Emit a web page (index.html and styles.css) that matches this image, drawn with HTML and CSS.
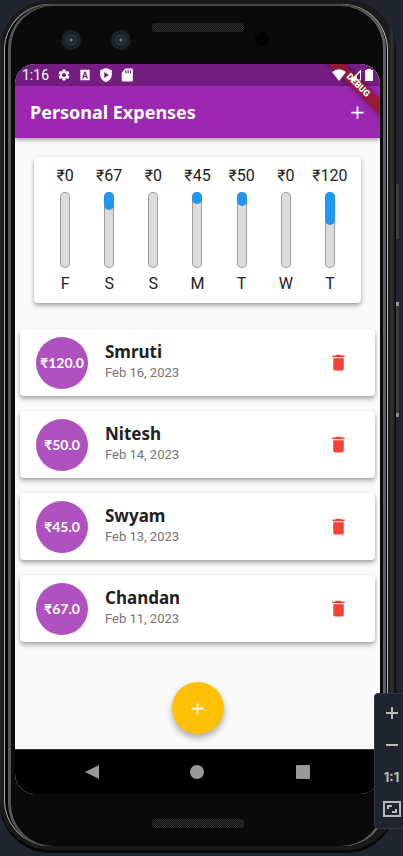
FILE: index.html
```
<!DOCTYPE html>
<html lang="en">
<head>
<meta charset="utf-8">
<meta name="viewport" content="width=device-width, initial-scale=1">
<title>Personal Expenses</title>
<link rel="stylesheet" href="styles.css">
</head>
<body>
<svg class="symbols" aria-hidden="true">
  <symbol id="trash" viewBox="0 0 24 24"><path d="M6 19c0 1.100.9 2 2 2h8c1.100 0 2-.9 2-2V7H6v12zM19 4h-3.500l-1-1h-5l-1 1H5v2h14V4z"/></symbol>
  <symbol id="plus" viewBox="0 0 24 24"><path d="M19 13h-6v6h-2v-6H5v-2h6V5h2v6h6v2z"/></symbol>
</svg>
<div class="device">
  <div class="rim"><div class="bezel">
    <div class="top-bezel">
      <div class="cameras"><i class="lens"></i><i class="lens"></i></div>
      <i class="speaker"></i>
      <i class="sensor"></i>
    </div>
    <div class="screen">
      <div class="statusbar">
        <span class="clock">1:16</span>
        <svg class="status-icon gear" viewBox="0 0 24 24"><path d="M19.140 12.940c.04-.3.060-.61.060-.94 0-.32-.02-.64-.07-.94l2.030-1.580c.18-.14.23-.41.120-.61l-1.920-3.320c-.12-.22-.37-.29-.59-.22l-2.390.96c-.5-.38-1.030-.7-1.620-.94l-.36-2.540c-.04-.24-.24-.41-.48-.41h-3.840c-.24 0-.43.17-.47.41l-.36 2.540c-.59.24-1.130.57-1.620.94l-2.390-.96c-.22-.08-.47 0-.59.22L2.740 8.870c-.12.210-.08.470.12.610l2.030 1.580c-.05.3-.09.630-.09.940s.02.640.07.940l-2.030 1.580c-.18.140-.23.410-.12.610l1.920 3.320c.12.220.37.290.59.220l2.390-.96c.5.380 1.030.7 1.620.94l.36 2.540c.05.240.24.410.48.410h3.840c.24 0 .44-.17.47-.41l.36-2.540c.59-.24 1.130-.56 1.620-.94l2.390.96c.22.080.47 0 .59-.22l1.920-3.320c.12-.22.070-.47-.12-.61l-2.010-1.580zM12 15.600a3.600 3.600 0 1 1 0-7.200 3.600 3.600 0 0 1 0 7.200z"/></svg>
        <svg class="status-icon" viewBox="0 0 24 24"><path fill-rule="evenodd" d="M4 3h16v18H4zM11 6 7 18h2.500l.8-2.500h3.400l.8 2.500H17L13 6zm1 3 1.100 4.500h-2.200z"/></svg>
        <svg class="status-icon" viewBox="0 0 24 24"><path fill-rule="evenodd" d="M12 0 2 4v7c0 6 4 11 10 13 6-2 10-7 10-13V4zM9 7l8 5-8 5z"/></svg>
        <svg class="status-icon" viewBox="0 0 24 24"><path fill-rule="evenodd" d="M9 1h11q2 0 2 2v18q0 2-2 2H5q-2 0-2-2V8zM9 4v5h2V4zm4 0v5h2V4zm4 0v5h2V4z"/></svg>
        <span class="signals">
          <svg class="wifi" viewBox="0 0 14 12"><path d="M0 3Q7-2.500 14 3L7 12z"/></svg>
          <svg class="cell" viewBox="0 0 12 12"><path fill-rule="evenodd" d="M0 12 12 0v12zM7.500 6.500V11H11V3z"/></svg>
          <svg class="battery" viewBox="0 0 8 12"><path d="M2 0h4v1h2v11H0V1h2z"/></svg>
        </span>
      </div>
      <header class="appbar">
        <h1>Personal Expenses</h1>
        <button class="icon-button" aria-label="Add expense"><svg><use href="#plus"/></svg></button>
      </header>
      <span class="ribbon">DEBUG</span>
      <main>
        <section class="chart card" aria-label="Last seven days">
          <div class="day"><span>₹0</span><div class="bar"></div><span>F</span></div>
          <div class="day"><span>₹67</span><div class="bar"><i style="height:24%"></i></div><span>S</span></div>
          <div class="day"><span>₹0</span><div class="bar"></div><span>S</span></div>
          <div class="day"><span>₹45</span><div class="bar"><i style="height:16%"></i></div><span>M</span></div>
          <div class="day"><span>₹50</span><div class="bar"><i style="height:18%"></i></div><span>T</span></div>
          <div class="day"><span>₹0</span><div class="bar"></div><span>W</span></div>
          <div class="day"><span>₹120</span><div class="bar"><i style="height:43%"></i></div><span>T</span></div>
        </section>
        <ul class="expenses">
          <li class="expense card"><span class="amount">₹120.0</span><div class="info"><h2>Smruti</h2><p>Feb 16, 2023</p></div><button class="icon-button delete" aria-label="Delete Smruti"><svg><use href="#trash"/></svg></button></li>
          <li class="expense card"><span class="amount">₹50.0</span><div class="info"><h2>Nitesh</h2><p>Feb 14, 2023</p></div><button class="icon-button delete" aria-label="Delete Nitesh"><svg><use href="#trash"/></svg></button></li>
          <li class="expense card"><span class="amount">₹45.0</span><div class="info"><h2>Swyam</h2><p>Feb 13, 2023</p></div><button class="icon-button delete" aria-label="Delete Swyam"><svg><use href="#trash"/></svg></button></li>
          <li class="expense card"><span class="amount">₹67.0</span><div class="info"><h2>Chandan</h2><p>Feb 11, 2023</p></div><button class="icon-button delete" aria-label="Delete Chandan"><svg><use href="#trash"/></svg></button></li>
        </ul>
        <button class="fab" aria-label="Add expense"><svg><use href="#plus"/></svg></button>
      </main>
      <nav class="navbar">
        <button aria-label="Back"><svg viewBox="0 0 14 14"><path d="M14 0v14L0 7z"/></svg></button>
        <button aria-label="Home"><svg viewBox="0 0 14 14"><circle cx="7" cy="7" r="7"/></svg></button>
        <button aria-label="Overview"><svg viewBox="0 0 14 14"><rect width="14" height="14" rx="1"/></svg></button>
      </nav>
    </div>
    <div class="bottom-bezel"><i class="speaker"></i></div>
  </div></div>
  <i class="side-key power"></i>
  <i class="side-key volume"></i>
</div>
<div class="zoombar">
  <button aria-label="Zoom in"><svg viewBox="0 0 18 18"><path d="M9 3v12M3 9h12"/></svg></button>
  <button aria-label="Zoom out"><svg viewBox="0 0 18 18"><path d="M3 9h12"/></svg></button>
  <button>1:1</button>
  <button aria-label="Fit to window"><svg class="fit" viewBox="0 0 18 18"><path d="M1 2h16v14H1zM5 9V6h4M13 9v3H9"/></svg></button>
</div>
</body>
</html>
```
FILE: styles.css
```
* { box-sizing: border-box; }
body {
  margin: 0;
  position: relative;
  overflow-x: hidden;
  background: #20242e;
  color: #212121;
  font-family: Roboto, "Noto Sans", sans-serif;
}
h1, h2, p, ul { margin: 0; padding: 0; }
i { display: block; }
button { border: 0; padding: 0; background: none; color: inherit; font: inherit; }
svg { display: block; fill: currentColor; }
.symbols { position: absolute; width: 0; height: 0; }

/* Phone body */
.device {
  position: relative;
  margin: 0 7px 4px 0;
  padding: 4px 8px 7px 4px;
  border-radius: 50px;
  background: linear-gradient(90deg, #252525, #1a1a1a 3px, #1a1a1a 98%, #333 99%, #050505);
  box-shadow: inset 0 -3px #080808;
}
.rim {
  padding: 2px 2px 0 4px;
  border-radius: 46px;
  background: #030303;
  box-shadow: inset 1px 0 #aaa, inset -1px 0 #bbb, inset 0 2px #484848, inset 0 -2px #333;
}
.bezel {
  padding: 0 6px 0 7px;
  border-radius: 42px;
  background: #0a0a0a;
  box-shadow: inset 3px 0 #55565a, inset -3px 0 #606064;
}
.top-bezel {
  height: 58px;
  display: grid;
  grid-template-columns: 1fr 92px 1fr;
  padding-top: 17px;
}
.cameras { display: flex; gap: 30px; padding: 7px 0 0 46px; }
.lens {
  width: 20px;
  height: 20px;
  border-radius: 50%;
  background: radial-gradient(circle, #73777a 0 1px, #22272b 2px 4px, #33393d 5px, #192026 6px);
}
.speaker {
  width: 92px;
  height: 9px;
  border-radius: 3px;
  background: repeating-conic-gradient(#303030 0 25%, #111 0 50%) 0 0 / 2px 2px;
}
.sensor { width: 14px; height: 14px; margin: 9px 0 0 11px; border-radius: 50%; background: #010104; }
.bottom-bezel { height: 52px; padding-top: 25px; }
.bottom-bezel .speaker { margin: 0 auto; }
.side-key { position: absolute; right: -3px; width: 3px; background: #3c3c3e; }
.power { top: 184px; height: 55px; }
.volume { top: 302px; height: 115px; border-top: 4px solid #999; border-bottom: 4px solid #888; }

/* App */
.screen {
  position: relative;
  overflow: hidden;
  border-radius: 20px;
  background: #fafafa;
}
.statusbar {
  display: flex;
  align-items: center;
  gap: 7px;
  height: 22px;
  padding: 0 7px;
  background: #751d83;
  color: #fff;
}
.clock { font-size: 14px; margin-right: 1px; }
.status-icon { width: 14px; height: 14px; }
.signals { position: relative; z-index: 1; display: flex; gap: 4px; margin-left: auto; }
.wifi { width: 14px; height: 12px; }
.cell { width: 11px; height: 12px; }
.battery { width: 8px; height: 12px; }
.appbar {
  position: relative;
  display: flex;
  align-items: center;
  justify-content: space-between;
  height: 52px;
  padding: 0 12px 0 15px;
  background: #9c27b0;
  color: #fff;
  box-shadow: 0 2px 4px rgba(0, 0, 0, .35);
}
h1 { font: 700 18px/26px "Noto Sans", sans-serif; }
.icon-button svg { width: 21px; height: 21px; }
.ribbon {
  position: absolute;
  top: 16px;
  right: -28px;
  width: 100px;
  height: 11px;
  transform: rotate(45deg);
  background: rgba(153, 24, 35, .85);
  box-shadow: 0 0 5px rgba(0, 0, 0, .5);
  color: #fff;
  font: 900 9px/11px Roboto, sans-serif;
  text-align: center;
}
main { padding: 19px 5px 15px; }
.card {
  border-radius: 4px;
  background: #fff;
  box-shadow: 0 3px 5px rgba(0, 0, 0, .28), 0 1px 3px rgba(0, 0, 0, .12);
}
.chart { display: flex; margin: 0 14px 26px; padding: 8px 9px; }
.day {
  flex: 1 1 0;
  display: flex;
  flex-direction: column;
  align-items: center;
  gap: 5px;
  font-size: 16px;
  line-height: 22px;
  white-space: nowrap;
}
.bar {
  width: 10px;
  height: 76px;
  border-radius: 5px;
  background: #dcdcdc;
  box-shadow: inset 0 0 0 1px #9e9e9e;
}
.bar i { border-radius: 5px; background: #2196f3; }
.expenses { display: grid; gap: 15px; list-style: none; }
.expense { display: flex; align-items: center; height: 67px; padding: 0 26px 0 16px; }
.amount {
  width: 52px;
  height: 52px;
  border-radius: 50%;
  background: #af52bf;
  color: #fff;
  font: 700 14px/52px Lato, "Open Sans", sans-serif;
  text-align: center;
}
.info { flex: 1; margin-left: 17px; padding-bottom: 1px; }
h2 { font: 700 17px/22px "Noto Sans", sans-serif; }
.info p { color: #757575; font-size: 13px; line-height: 20px; }
.delete { color: #f44336; }
.fab {
  display: grid;
  place-items: center;
  width: 52px;
  height: 52px;
  margin: 40px auto 0;
  border-radius: 50%;
  background: #ffc107;
  color: #fff;
  box-shadow: 0 4px 7px rgba(0, 0, 0, .32);
}
.fab svg { width: 21px; height: 21px; }
.navbar {
  display: flex;
  justify-content: space-around;
  height: 45px;
  padding: 0 24px;
  border-top: 1px solid #333;
  background: #000;
  color: #999;
}
.navbar svg { width: 14px; height: 14px; }

/* Emulator zoom controls */
.zoombar {
  position: absolute;
  right: -6px;
  bottom: 28px;
  display: grid;
  grid-auto-rows: 32px;
  width: 35px;
  padding: 3px 0;
  border: 1px solid #33363d;
  border-radius: 4px;
  background: #20242e;
  color: #b8b9bb;
  font: 700 13px/32px Inter, sans-serif;
}
.zoombar button { display: grid; place-items: center; }
.zoombar svg { width: 18px; height: 18px; fill: none; stroke: currentColor; stroke-width: 2; }
```
